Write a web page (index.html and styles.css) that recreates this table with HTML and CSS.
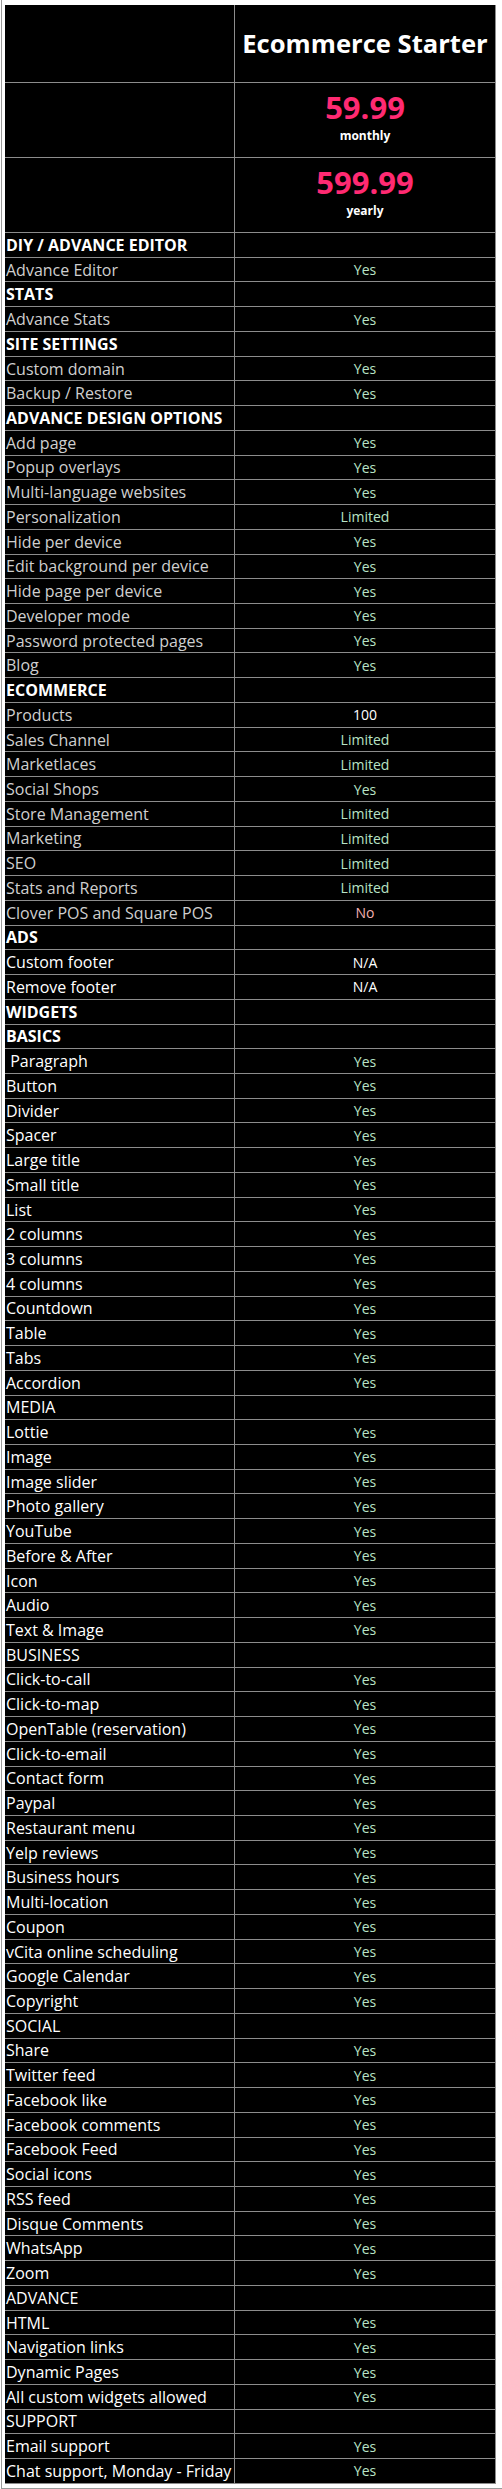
FILE: index.html
```html
<!DOCTYPE html>
<html>
<head>
<meta charset="utf-8">
<link rel="stylesheet" href="styles.css">
</head>
<body>
<div class="page">
<div class="grid">
<div class="row head"><div class="lab"></div><div class="val"><span class="title">Ecommerce Starter</span></div></div>
<div class="row price"><div class="lab"></div><div class="val stack"><div class="amt">59.99</div><div class="per">monthly</div></div></div>
<div class="row price"><div class="lab"></div><div class="val stack"><div class="amt">599.99</div><div class="per">yearly</div></div></div>

<div class="row"><div class="lab sec">DIY / ADVANCE EDITOR</div><div class="val"></div></div>
<div class="row"><div class="lab grey">Advance Editor</div><div class="val yes">Yes</div></div>
<div class="row"><div class="lab sec">STATS</div><div class="val"></div></div>
<div class="row"><div class="lab grey">Advance Stats</div><div class="val yes">Yes</div></div>
<div class="row"><div class="lab sec">SITE SETTINGS</div><div class="val"></div></div>
<div class="row"><div class="lab grey">Custom domain</div><div class="val yes">Yes</div></div>
<div class="row"><div class="lab grey">Backup / Restore</div><div class="val yes">Yes</div></div>
<div class="row"><div class="lab sec">ADVANCE DESIGN OPTIONS</div><div class="val"></div></div>
<div class="row"><div class="lab grey">Add page</div><div class="val yes">Yes</div></div>
<div class="row"><div class="lab grey">Popup overlays</div><div class="val yes">Yes</div></div>
<div class="row"><div class="lab grey">Multi-language websites</div><div class="val yes">Yes</div></div>
<div class="row"><div class="lab grey">Personalization</div><div class="val yes">Limited</div></div>
<div class="row"><div class="lab grey">Hide per device</div><div class="val yes">Yes</div></div>
<div class="row"><div class="lab grey">Edit background per device</div><div class="val yes">Yes</div></div>
<div class="row"><div class="lab grey">Hide page per device</div><div class="val yes">Yes</div></div>
<div class="row"><div class="lab grey">Developer mode</div><div class="val yes">Yes</div></div>
<div class="row"><div class="lab grey">Password protected pages</div><div class="val yes">Yes</div></div>
<div class="row"><div class="lab grey">Blog</div><div class="val yes">Yes</div></div>
<div class="row"><div class="lab sec">ECOMMERCE</div><div class="val"></div></div>
<div class="row"><div class="lab grey">Products</div><div class="val na">100</div></div>
<div class="row"><div class="lab grey">Sales Channel</div><div class="val yes">Limited</div></div>
<div class="row"><div class="lab grey">Marketlaces</div><div class="val yes">Limited</div></div>
<div class="row"><div class="lab grey">Social Shops</div><div class="val yes">Yes</div></div>
<div class="row"><div class="lab grey">Store Management</div><div class="val yes">Limited</div></div>
<div class="row"><div class="lab grey">Marketing</div><div class="val yes">Limited</div></div>
<div class="row"><div class="lab grey">SEO</div><div class="val yes">Limited</div></div>
<div class="row"><div class="lab grey">Stats and Reports</div><div class="val yes">Limited</div></div>
<div class="row"><div class="lab grey">Clover POS and Square POS</div><div class="val no">No</div></div>
<div class="row"><div class="lab sec">ADS</div><div class="val"></div></div>
<div class="row"><div class="lab">Custom footer</div><div class="val na">N/A</div></div>
<div class="row"><div class="lab">Remove footer</div><div class="val na">N/A</div></div>
<div class="row"><div class="lab sec">WIDGETS</div><div class="val"></div></div>
<div class="row"><div class="lab sec">BASICS</div><div class="val"></div></div>
<div class="row"><div class="lab">&nbsp;Paragraph</div><div class="val yes">Yes</div></div>
<div class="row"><div class="lab">Button</div><div class="val yes">Yes</div></div>
<div class="row"><div class="lab">Divider</div><div class="val yes">Yes</div></div>
<div class="row"><div class="lab">Spacer</div><div class="val yes">Yes</div></div>
<div class="row"><div class="lab">Large title</div><div class="val yes">Yes</div></div>
<div class="row"><div class="lab">Small title</div><div class="val yes">Yes</div></div>
<div class="row"><div class="lab">List</div><div class="val yes">Yes</div></div>
<div class="row"><div class="lab">2 columns</div><div class="val yes">Yes</div></div>
<div class="row"><div class="lab">3 columns</div><div class="val yes">Yes</div></div>
<div class="row"><div class="lab">4 columns</div><div class="val yes">Yes</div></div>
<div class="row"><div class="lab">Countdown</div><div class="val yes">Yes</div></div>
<div class="row"><div class="lab">Table</div><div class="val yes">Yes</div></div>
<div class="row"><div class="lab">Tabs</div><div class="val yes">Yes</div></div>
<div class="row"><div class="lab">Accordion</div><div class="val yes">Yes</div></div>
<div class="row"><div class="lab">MEDIA</div><div class="val"></div></div>
<div class="row"><div class="lab">Lottie</div><div class="val yes">Yes</div></div>
<div class="row"><div class="lab">Image</div><div class="val yes">Yes</div></div>
<div class="row"><div class="lab">Image slider</div><div class="val yes">Yes</div></div>
<div class="row"><div class="lab">Photo gallery</div><div class="val yes">Yes</div></div>
<div class="row"><div class="lab">YouTube</div><div class="val yes">Yes</div></div>
<div class="row"><div class="lab">Before &amp; After</div><div class="val yes">Yes</div></div>
<div class="row"><div class="lab">Icon</div><div class="val yes">Yes</div></div>
<div class="row"><div class="lab">Audio</div><div class="val yes">Yes</div></div>
<div class="row"><div class="lab">Text &amp; Image</div><div class="val yes">Yes</div></div>
<div class="row"><div class="lab">BUSINESS</div><div class="val"></div></div>
<div class="row"><div class="lab">Click-to-call</div><div class="val yes">Yes</div></div>
<div class="row"><div class="lab">Click-to-map</div><div class="val yes">Yes</div></div>
<div class="row"><div class="lab">OpenTable (reservation)</div><div class="val yes">Yes</div></div>
<div class="row"><div class="lab">Click-to-email</div><div class="val yes">Yes</div></div>
<div class="row"><div class="lab">Contact form</div><div class="val yes">Yes</div></div>
<div class="row"><div class="lab">Paypal</div><div class="val yes">Yes</div></div>
<div class="row"><div class="lab">Restaurant menu</div><div class="val yes">Yes</div></div>
<div class="row"><div class="lab">Yelp reviews</div><div class="val yes">Yes</div></div>
<div class="row"><div class="lab">Business hours</div><div class="val yes">Yes</div></div>
<div class="row"><div class="lab">Multi-location</div><div class="val yes">Yes</div></div>
<div class="row"><div class="lab">Coupon</div><div class="val yes">Yes</div></div>
<div class="row"><div class="lab">vCita online scheduling</div><div class="val yes">Yes</div></div>
<div class="row"><div class="lab">Google Calendar</div><div class="val yes">Yes</div></div>
<div class="row"><div class="lab">Copyright</div><div class="val yes">Yes</div></div>
<div class="row"><div class="lab">SOCIAL</div><div class="val"></div></div>
<div class="row"><div class="lab">Share</div><div class="val yes">Yes</div></div>
<div class="row"><div class="lab">Twitter feed</div><div class="val yes">Yes</div></div>
<div class="row"><div class="lab">Facebook like</div><div class="val yes">Yes</div></div>
<div class="row"><div class="lab">Facebook comments</div><div class="val yes">Yes</div></div>
<div class="row"><div class="lab">Facebook Feed</div><div class="val yes">Yes</div></div>
<div class="row"><div class="lab">Social icons</div><div class="val yes">Yes</div></div>
<div class="row"><div class="lab">RSS feed</div><div class="val yes">Yes</div></div>
<div class="row"><div class="lab">Disque Comments</div><div class="val yes">Yes</div></div>
<div class="row"><div class="lab">WhatsApp</div><div class="val yes">Yes</div></div>
<div class="row"><div class="lab">Zoom</div><div class="val yes">Yes</div></div>
<div class="row"><div class="lab">ADVANCE</div><div class="val"></div></div>
<div class="row"><div class="lab">HTML</div><div class="val yes">Yes</div></div>
<div class="row"><div class="lab">Navigation links</div><div class="val yes">Yes</div></div>
<div class="row"><div class="lab">Dynamic Pages</div><div class="val yes">Yes</div></div>
<div class="row"><div class="lab">All custom widgets allowed</div><div class="val yes">Yes</div></div>
<div class="row"><div class="lab">SUPPORT</div><div class="val"></div></div>
<div class="row"><div class="lab">Email support</div><div class="val yes">Yes</div></div>
<div class="row"><div class="lab">Chat support, Monday - Friday</div><div class="val yes">Yes</div></div>
</div>
</div>
</body>
</html>
```

FILE: styles.css
```css
html, body {
  margin: 0;
  padding: 0;
  background: #ffffff;
}
body {
  font-family: "Open Sans", "Liberation Sans", sans-serif;
}
.page {
  margin-left: 1px;
  border-left: 1px solid #9a9a9a;
  border-bottom: 1px solid #9a9a9a;
  padding: 5px 0 4px 3px;
}
.grid {
  width: 491px;
  background: #000;
}
.row {
  display: flex;
  box-sizing: border-box;
  height: 24.736px;
  border-bottom: 1px solid #8c8c8c;
  border-right: 1px solid #8c8c8c;
}
.row.head {
  height: 78px;
}
.row.price {
  height: 75px;
}
.lab {
  box-sizing: border-box;
  width: 230px;
  flex: none;
  border-right: 1px solid #8c8c8c;
  padding-left: 1px;
  display: flex;
  align-items: center;
  color: #ffffff;
  font-size: 16px;
  white-space: nowrap;
  overflow: hidden;
}
.lab.sec {
  font-weight: 700;
}
.lab.grey {
  color: #cfcfcf;
}
.val {
  flex: 1;
  display: flex;
  align-items: center;
  justify-content: center;
  font-size: 14px;
  color: #ffffff;
}
.val.yes {
  color: #b8e3c6;
}
.val.no {
  color: #f3b0b0;
}
.val.na {
  color: #ffffff;
}
.title {
  font-size: 25.6px;
  font-weight: 700;
  color: #ffffff;
}
.val.stack {
  flex-direction: column;
  justify-content: flex-start;
  padding-top: 9px;
}
.amt {
  font-size: 31px;
  line-height: 31px;
  font-weight: 700;
  color: #ff2a72;
}
.per {
  margin-top: 6px;
  font-size: 12px;
  line-height: 14px;
  font-weight: 700;
  color: #ffffff;
}
```
